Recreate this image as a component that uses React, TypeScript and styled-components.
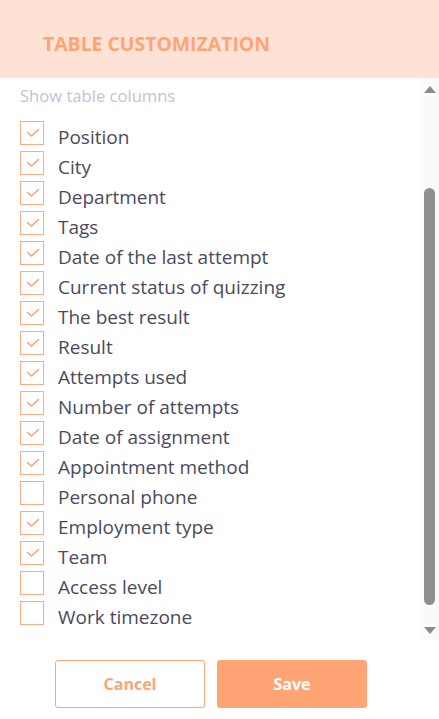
import React, { useState } from "react";
import styled, { createGlobalStyle } from "styled-components";

const GlobalStyle = createGlobalStyle`
  html, body { margin: 0; padding: 0; background: #ffffff; }
  body { font-family: "Open Sans", "Noto Sans", sans-serif; }
  * { box-sizing: border-box; }
`;

const Page = styled.div`
  width: 439px;
  height: 719px;
  display: flex;
  flex-direction: column;
  background: #ffffff;
  overflow: hidden;
`;

const Header = styled.div`
  height: 78px;
  flex: none;
  background: #ffe2d6;
  display: flex;
  align-items: center;
  padding-left: 43px;
  padding-top: 8px;
`;

const Title = styled.h1`
  margin: 0;
  font-size: 19.4px;
  font-weight: 700;
  color: #ffa474;
  letter-spacing: 0;
`;

const Body = styled.div`
  height: 562px;
  flex: none;
  display: flex;
`;

const List = styled.div`
  flex: 1;
  display: flex;
  flex-direction: column;
  padding: 8px 0 0 20px;
  overflow: hidden;
`;

const Caption = styled.div`
  font-size: 16.6px;
  line-height: 20px;
  color: #c4c2d4;
  margin-bottom: 12px;
`;

const Row = styled.label`
  height: 30px;
  flex: none;
  display: flex;
  align-items: flex-start;
  gap: 14px;
  cursor: pointer;
`;

const Box = styled.span<{ $checked: boolean }>`
  width: 24px;
  height: 24px;
  margin-top: 3px;
  flex: none;
  border: 1.5px solid #ffaa80;
  background: #ffffff;
  display: flex;
  align-items: center;
  justify-content: center;
`;

const Label = styled.span`
  font-size: 19px;
  color: #4b4a5c;
  line-height: 24px;
  margin-top: 7px;
  white-space: nowrap;
`;

const ScrollBar = styled.div`
  width: 19px;
  flex: none;
  background: #fafafa;
  display: flex;
  flex-direction: column;
  align-items: center;
  padding-top: 8px;
`;

const Arrow = styled.div<{ $down?: boolean }>`
  width: 0;
  height: 0;
  border-left: 6px solid transparent;
  border-right: 6px solid transparent;
  ${(p) =>
    p.$down
      ? "border-top: 7px solid #8c8c8c;"
      : "border-bottom: 7px solid #8c8c8c;"}
`;

const Thumb = styled.div`
  width: 11px;
  height: 417px;
  border-radius: 6px;
  background: #8f8f8f;
  margin: 95px 0 22px;
`;

const Footer = styled.div`
  flex: none;
  display: flex;
  justify-content: center;
  gap: 12px;
  padding: 20px 17px 0 0;
`;

const Button = styled.button<{ $primary?: boolean }>`
  width: 150px;
  height: 48px;
  border-radius: 3px;
  font-family: inherit;
  font-size: 16px;
  font-weight: 700;
  cursor: pointer;
  border: 1px solid #ffa474;
  background: ${(p) => (p.$primary ? "#ffa575" : "#ffffff")};
  color: ${(p) => (p.$primary ? "#ffffff" : "#ffa474")};
`;

const CheckIcon = styled.svg`
  width: 14px;
  height: 10px;
  margin: 0 0 0 1px;
`;

const Check = () => (
  <CheckIcon viewBox="0 0 14 10">
    <path d="M1.5 4.5 L5.5 8 L12.5 1.5" fill="none" stroke="#ff9f72" strokeWidth="1.5" strokeLinecap="round" strokeLinejoin="round" />
  </CheckIcon>
);

const initial: [string, boolean][] = [
  ["Position", true],
  ["City", true],
  ["Department", true],
  ["Tags", true],
  ["Date of the last attempt", true],
  ["Current status of quizzing", true],
  ["The best result", true],
  ["Result", true],
  ["Attempts used", true],
  ["Number of attempts", true],
  ["Date of assignment", true],
  ["Appointment method", true],
  ["Personal phone", false],
  ["Employment type", true],
  ["Team", true],
  ["Access level", false],
  ["Work timezone", false],
];

export default function App() {
  const [items, setItems] = useState(initial);
  const toggle = (i: number) =>
    setItems((prev) => prev.map((it, j) => (j === i ? [it[0], !it[1]] : it)) as [string, boolean][]);
  return (
    <>
      <GlobalStyle />
      <Page>
        <Header>
          <Title>TABLE CUSTOMIZATION</Title>
        </Header>
        <Body>
          <List>
            <Caption>Show table columns</Caption>
            {items.map(([name, checked], i) => (
              <Row key={name} onClick={() => toggle(i)}>
                <Box $checked={checked}>{checked && <Check />}</Box>
                <Label>{name}</Label>
              </Row>
            ))}
          </List>
          <ScrollBar>
            <Arrow />
            <Thumb />
            <Arrow $down />
          </ScrollBar>
        </Body>
        <Footer>
          <Button>Cancel</Button>
          <Button $primary>Save</Button>
        </Footer>
      </Page>
    </>
  );
}
